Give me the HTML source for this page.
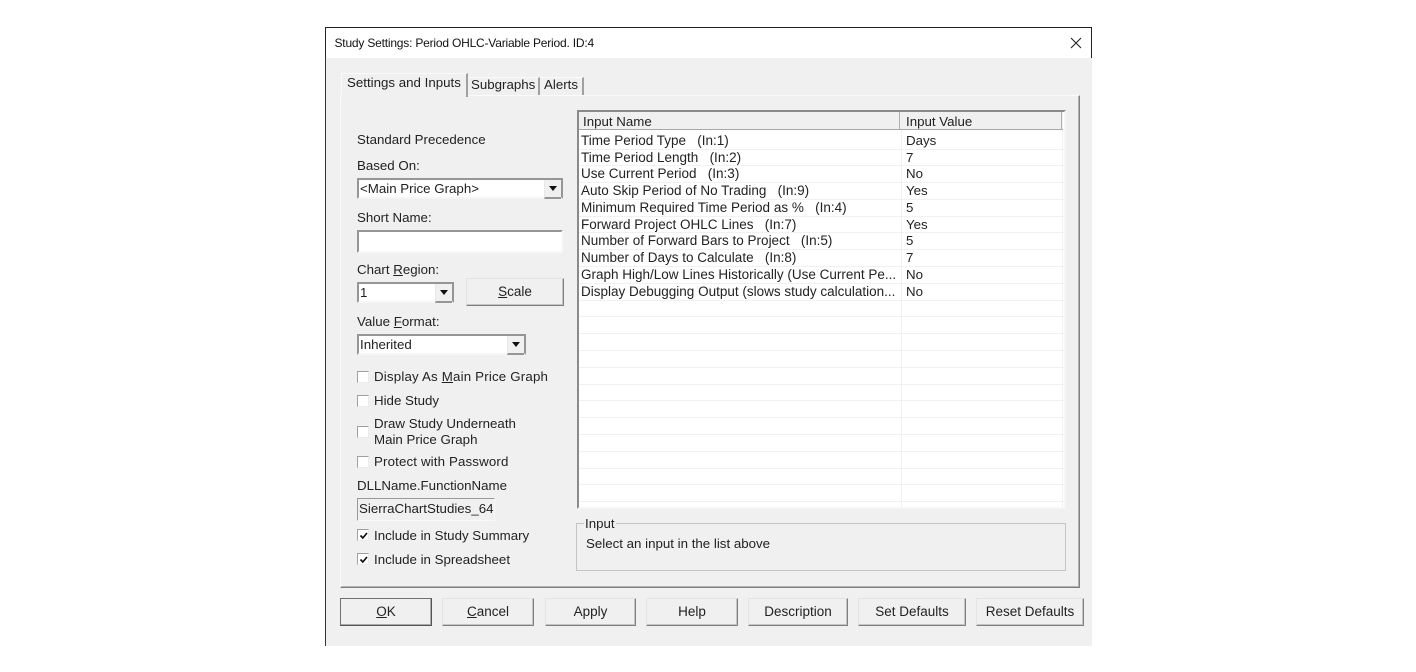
<!DOCTYPE html>
<html><head><meta charset="utf-8"><style>
html,body{margin:0;padding:0;background:#fff;width:1416px;height:672px;overflow:hidden}
body{position:relative;font-family:"Liberation Sans",sans-serif;font-size:13.3px;color:#222}
div{position:absolute;box-sizing:border-box}
#w{left:0;top:0;width:1416px;height:672px;filter:blur(.35px)}
.t{white-space:pre;line-height:16px;height:16px}
.btn{background:#f0f0f0;border:1px solid;border-color:#e4e4e4 #808080 #808080 #e4e4e4;box-shadow:inset -1px -1px 0 #c4c4c4;text-align:center;line-height:26px;height:28px;top:598px;font-size:13.5px}
.combo{background:#fff;border:2px solid;border-color:#969696 #969696 #f6f6f6 #969696;height:21px;line-height:18px;padding-left:1px;white-space:pre}
.arr{right:0;top:0;bottom:-2px;width:17px;background:#f0f0f0;border-left:1px solid #e8e8e8;border-bottom:2px solid #969696}
.arr:after{content:"";position:absolute;left:4px;top:6px;border:4px solid transparent;border-top:5px solid #111;border-bottom:0}
.cb{width:12px;height:12px;left:357px;background:#fff;border:1px solid;border-color:#a0a0a0 #ececec #ececec #a0a0a0}
.cb svg{position:absolute;left:1px;top:1px}
.n{left:581px;font-size:13.5px}.v{left:906px}
.hl{left:579px;width:485px;height:1px;background:#f1f1f1}
u{text-decoration:underline;text-underline-offset:1px}
</style></head><body><div id="w">
<div style="left:325px;top:27px;width:767px;height:31px;background:#fff;border-top:1px solid #222;border-left:1px solid #222;border-right:1px solid #222"></div>
<div style="left:325px;top:58px;width:767px;height:588px;background:#f0f0f0;border-left:1px solid #333"></div>
<div class="t" style="left:334.5px;top:35px;font-size:12px;letter-spacing:-.2px;color:#111">Study Settings: Period OHLC-Variable Period. ID:4</div>
<svg style="position:absolute;left:1070px;top:37px" width="12" height="12"><path d="M1 1L11 11M11 1L1 11" stroke="#222" stroke-width="1.1" fill="none"/></svg>

<!-- tab panel -->
<div style="left:340px;top:95px;width:740px;height:493px;border:1px solid;border-color:#fafafa #808080 #808080 #fafafa;box-shadow:inset -1px -1px 0 #b4b4b4"></div>
<div style="left:341px;top:73px;width:127px;height:24px;background:#f0f0f0;border-top:1px solid #fafafa;border-left:1px solid #fafafa;border-right:2px solid #a0a0a0"></div>
<div style="left:468px;top:77px;width:72px;height:18px;border-top:1px solid #fafafa;border-right:2px solid #a0a0a0"></div>
<div style="left:540px;top:77px;width:44px;height:18px;border-top:1px solid #fafafa;border-right:2px solid #a0a0a0"></div>
<div class="t" style="left:347px;top:75px">Settings and Inputs</div>
<div class="t" style="left:471px;top:77px">Subgraphs</div>
<div class="t" style="left:544px;top:77px">Alerts</div>

<!-- left column -->
<div class="t" style="left:357px;top:132px">Standard Precedence</div>
<div class="t" style="left:357px;top:158px">Based On:</div>
<div class="combo" style="left:357px;top:178px;width:206px">&lt;Main Price Graph&gt;<div class="arr"></div></div>
<div class="t" style="left:357px;top:210px">Short Name:</div>
<div class="combo" style="left:357px;top:230px;width:206px;height:23px;border-color:#969696 #f8f8f8 #f8f8f8 #969696"></div>
<div class="t" style="left:357px;top:262px">Chart <u>R</u>egion:</div>
<div class="combo" style="left:357px;top:282px;width:97px">1<div class="arr"></div></div>
<div class="btn" style="left:466px;top:278px;width:98px"><u>S</u>cale</div>
<div class="t" style="left:357px;top:314px">Value <u>F</u>ormat:</div>
<div class="combo" style="left:357px;top:334px;width:169px">Inherited<div class="arr"></div></div>

<div class="cb" style="top:371px"></div>
<div class="t" style="left:374px;top:369px;letter-spacing:.18px">Display As <u>M</u>ain Price Graph</div>
<div class="cb" style="top:395px"></div>
<div class="t" style="left:374px;top:393px">Hide Study</div>
<div class="cb" style="top:426px"></div>
<div class="t" style="left:374px;top:416px">Draw Study Underneath</div>
<div class="t" style="left:374px;top:432px">Main Price Graph</div>
<div class="cb" style="top:456px"></div>
<div class="t" style="left:374px;top:454px;letter-spacing:.14px">Protect with Password</div>
<div class="t" style="left:357px;top:478px">DLLName.FunctionName</div>
<div style="left:357px;top:498px;width:138px;height:23px;border:1px solid;border-color:#999 #f8f8f8 #f8f8f8 #999;line-height:20px;padding-left:1px;white-space:pre">SierraChartStudies_64</div>
<div class="cb" style="top:529px"><svg width="10" height="10"><path d="M1.5 4.5L3.8 7L8 2" stroke="#111" stroke-width="1.7" fill="none"/></svg></div>
<div class="t" style="left:374px;top:528px">Include in Study Summary</div>
<div class="cb" style="top:553px"><svg width="10" height="10"><path d="M1.5 4.5L3.8 7L8 2" stroke="#111" stroke-width="1.7" fill="none"/></svg></div>
<div class="t" style="left:374px;top:552px">Include in Spreadsheet</div>

<!-- list -->
<div style="left:577px;top:110px;width:489px;height:399px;background:#fff;border:2px solid;border-color:#8a8a8a #f6f6f6 #f6f6f6 #8a8a8a"></div>
<div style="left:579px;top:112px;width:484px;height:18px;background:#f0f0f0;border-bottom:1px solid #a8a8a8"></div>
<div style="left:899px;top:112px;width:1px;height:18px;background:#b0b0b0"></div>
<div style="left:1061px;top:112px;width:1px;height:18px;background:#b0b0b0"></div>
<div style="left:901px;top:130px;width:1px;height:377px;background:#f1f1f1"></div>
<div style="left:1062px;top:130px;width:1px;height:377px;background:#f1f1f1"></div>
<div class="hl" style="top:149px"></div><div class="hl" style="top:165px"></div><div class="hl" style="top:182px"></div><div class="hl" style="top:199px"></div><div class="hl" style="top:216px"></div><div class="hl" style="top:232px"></div><div class="hl" style="top:249px"></div><div class="hl" style="top:266px"></div><div class="hl" style="top:283px"></div><div class="hl" style="top:300px"></div><div class="hl" style="top:316px"></div><div class="hl" style="top:333px"></div><div class="hl" style="top:350px"></div><div class="hl" style="top:367px"></div><div class="hl" style="top:384px"></div><div class="hl" style="top:400px"></div><div class="hl" style="top:417px"></div><div class="hl" style="top:434px"></div><div class="hl" style="top:451px"></div><div class="hl" style="top:468px"></div><div class="hl" style="top:484px"></div><div class="hl" style="top:501px"></div>
<div class="t" style="left:583px;top:114px">Input Name</div>
<div class="t" style="left:906px;top:114px">Input Value</div>
<div class="t n" style="top:133px">Time Period Type   (In:1)</div><div class="t v" style="top:133px">Days</div>
<div class="t n" style="top:150px">Time Period Length   (In:2)</div><div class="t v" style="top:150px">7</div>
<div class="t n" style="top:166px">Use Current Period   (In:3)</div><div class="t v" style="top:166px">No</div>
<div class="t n" style="top:183px">Auto Skip Period of No Trading   (In:9)</div><div class="t v" style="top:183px">Yes</div>
<div class="t n" style="top:200px">Minimum Required Time Period as %   (In:4)</div><div class="t v" style="top:200px">5</div>
<div class="t n" style="top:217px">Forward Project OHLC Lines   (In:7)</div><div class="t v" style="top:217px">Yes</div>
<div class="t n" style="top:233px">Number of Forward Bars to Project   (In:5)</div><div class="t v" style="top:233px">5</div>
<div class="t n" style="top:250px">Number of Days to Calculate   (In:8)</div><div class="t v" style="top:250px">7</div>
<div class="t n" style="top:267px">Graph High/Low Lines Historically (Use Current Pe...</div><div class="t v" style="top:267px">No</div>
<div class="t n" style="top:284px">Display Debugging Output (slows study calculation...</div><div class="t v" style="top:284px">No</div>

<!-- group -->
<div style="left:576px;top:523px;width:490px;height:48px;border:1px solid #c4c4c4"></div>
<div class="t" style="left:584px;top:516px;background:#f0f0f0;padding:0 1px">Input</div>
<div class="t" style="left:586px;top:536px">Select an input in the list above</div>

<!-- buttons -->
<div class="btn" style="left:340px;width:92px;border-color:#707070 #555 #555 #707070;box-shadow:inset -1px -1px 0 #aaa"><u>O</u>K</div>
<div class="btn" style="left:442px;width:92px"><u>C</u>ancel</div>
<div class="btn" style="left:545px;width:91px">Apply</div>
<div class="btn" style="left:646px;width:92px">Help</div>
<div class="btn" style="left:748px;width:100px">Description</div>
<div class="btn" style="left:858px;width:108px">Set Defaults</div>
<div class="btn" style="left:976px;width:108px">Reset Defaults</div>
</div></body></html>
